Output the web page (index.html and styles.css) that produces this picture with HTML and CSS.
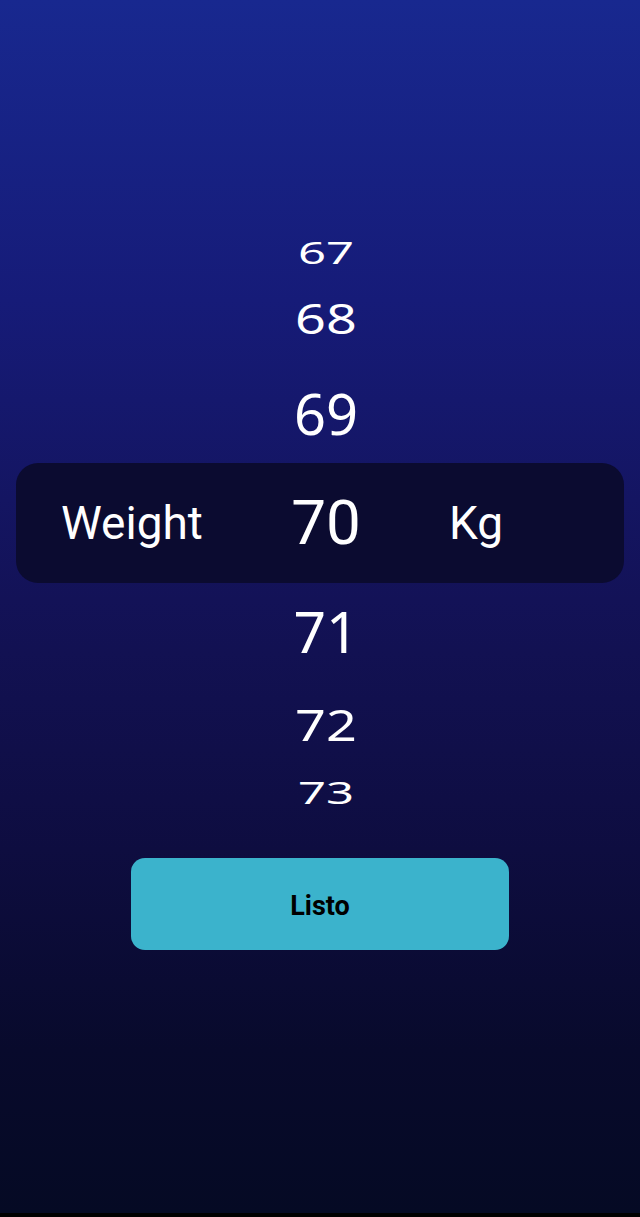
FILE: index.html
```html
<!DOCTYPE html>
<html lang="es">
<head>
<meta charset="utf-8">
<title>Weight picker</title>
<link rel="stylesheet" href="styles.css">
</head>
<body>
<main class="screen">
  <div class="picker">
    <div class="num n67">67</div>
    <div class="num n68">68</div>
    <div class="num n69">69</div>
    <div class="panel">
      <div class="label">Weight</div>
      <div class="current">70</div>
      <div class="unit">Kg</div>
    </div>
    <div class="num n71">71</div>
    <div class="num n72">72</div>
    <div class="num n73">73</div>
  </div>
  <button class="done">Listo</button>
</main>
</body>
</html>
```

FILE: styles.css
```css
* { box-sizing: border-box; }
html, body { margin: 0; padding: 0; }
body {
  width: 640px;
  height: 1217px;
  overflow: hidden;
  background: #000;
}
.screen {
  height: 1213px;
  background: linear-gradient(180deg, #18288f 0px, #161b78 300px, #131257 600px, #0e0d40 850px, #080a2c 1050px, #050a24 1213px);
  display: flex;
  flex-direction: column;
  align-items: center;
  padding-top: 222px;
  font-family: "Noto Sans", sans-serif;
  color: #fff;
}
.picker {
  width: 640px;
  display: flex;
  flex-direction: column;
}
.num {
  padding-left: 12px;
  text-align: center;
  font-family: "Noto Sans", sans-serif;
  color: #fff;
  transform-origin: 50% 50%;
}
.n67 { height: 60px; line-height: 60px; font-size: 49px; transform: scaleY(0.62); }
.n68 { height: 72px; line-height: 72px; font-size: 54px; transform: scaleY(0.78); }
.n69 { margin-top: 9px; height: 100px; line-height: 100px; font-size: 56px; }
.n71 { height: 96px; line-height: 96px; font-size: 57px; }
.n72 { height: 90px; line-height: 90px; font-size: 54px; transform: scaleY(0.8); }
.n73 { height: 46px; line-height: 46px; font-size: 49px; transform: scaleY(0.64); }

.panel {
  margin: 0 16px;
  height: 120px;
  border-radius: 22px;
  background: #0b0b30;
  display: flex;
  align-items: center;
  padding-left: 45px;
  font-family: Roboto, sans-serif;
}
.label {
  width: 200px;
  font-size: 46px;
  line-height: 1;
}
.current {
  width: 130px;
  text-align: center;
  font-family: Roboto, sans-serif;
  font-size: 62px;
  line-height: 1;
}
.unit {
  padding-left: 58px;
  font-size: 46px;
  line-height: 1;
}
.done {
  margin-top: 43px;
  width: 378px;
  height: 92px;
  padding-top: 4px;
  border: none;
  border-radius: 14px;
  background: #3bb3cc;
  color: #000;
  font-family: Roboto, sans-serif;
  font-weight: 700;
  font-size: 27px;
  cursor: pointer;
}
```
